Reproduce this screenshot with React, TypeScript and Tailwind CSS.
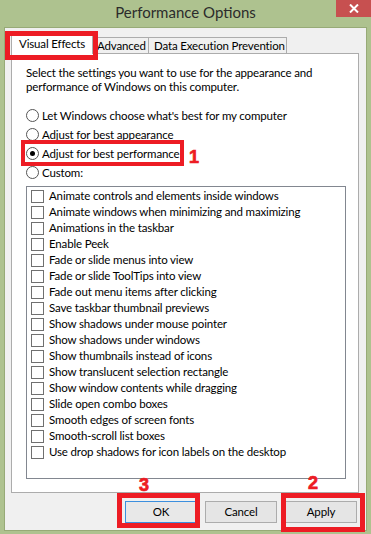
import { useState } from 'react';

const EFFECTS = [
  'Animate controls and elements inside windows',
  'Animate windows when minimizing and maximizing',
  'Animations in the taskbar',
  'Enable Peek',
  'Fade or slide menus into view',
  'Fade or slide ToolTips into view',
  'Fade out menu items after clicking',
  'Save taskbar thumbnail previews',
  'Show shadows under mouse pointer',
  'Show shadows under windows',
  'Show thumbnails instead of icons',
  'Show translucent selection rectangle',
  'Show window contents while dragging',
  'Slide open combo boxes',
  'Smooth edges of screen fonts',
  'Smooth-scroll list boxes',
  'Use drop shadows for icon labels on the desktop',
];

const MODES = [
  { id: 'auto', label: "Let Windows choose what's best for my computer" },
  { id: 'appearance', label: 'Adjust for best appearance' },
  { id: 'performance', label: 'Adjust for best performance' },
  { id: 'custom', label: 'Custom:' },
];

const TABS = ['Visual Effects', 'Advanced', 'Data Execution Prevention'];

// annotation digit drawn over the screenshot
function Marker({ n, className }: { n: string; className: string }) {
  return (
    <span
      className={`absolute font-bold text-[18px] leading-none tracking-normal text-[#ed1c24] [-webkit-text-stroke:0.7px_#ed1c24] ${className}`}
      style={{ fontFamily: '"Liberation Sans", Arial, sans-serif' }}
    >
      {n}
    </span>
  );
}

export default function App() {
  const [mode, setMode] = useState('performance');
  const [checked, setChecked] = useState<Record<number, boolean>>({});

  return (
    <div
      className="w-[371px] h-[534px] bg-[#aec28f] flex flex-col overflow-hidden text-black"
      style={{ fontFamily: 'Lato, "Noto Sans", sans-serif' }}
    >
      {/* title bar */}
      <div className="relative h-[27px] flex justify-center">
        <span className="pt-[2px] text-[15px] leading-[20px] text-[#2b2b2b]">Performance Options</span>
        <button className="absolute right-0 top-0 w-[35px] h-[17px] bg-[#c75050] flex items-center justify-center">
          <svg width="10" height="9" viewBox="0 0 10 9" stroke="white" strokeWidth="2">
            <path d="M1 0.5l8 8M9 0.5l-8 8" />
          </svg>
        </button>
      </div>

      {/* client area */}
      <div className="ml-[4px] w-[363px] h-[504px] border border-[#97aa77] bg-[#f0f0f0] flex flex-col text-[11.5px] tracking-[-0.15px]">
        <div className="h-[25px] pl-[6px] flex items-end whitespace-nowrap">
          {TABS.map((t, i) =>
            i === 0 ? (
              <div
                key={t}
                className="relative z-10 -mb-px w-[82px] h-[20px] pl-[7px] bg-white border border-b-0 border-[#acacac] leading-[18px]"
              >
                {t}
                <div className="absolute left-[-7px] top-[-4px] w-[93px] h-[29px] border-[5px] border-[#ed1c24]" />
              </div>
            ) : (
              <div
                key={t}
                className={`h-[16px] border border-b-0 border-[#acacac] bg-[#f0f0f0] leading-[15px] ${
                  i === 1 ? 'w-[56px] pl-[4px] border-l-0' : 'w-[139px] pl-[5px] -ml-px'
                }`}
              >
                {t}
              </div>
            ),
          )}
        </div>

        <div className="ml-[6px] w-[348px] h-[440px] border border-[#acacac] bg-white pl-[14px] pt-[12px]">
          <p className="leading-[14px]">
            Select the settings you want to use for the appearance and
            <br />
            performance of Windows on this computer.
          </p>

          <div className="mt-[12px] flex flex-col">
            {MODES.map((m) => (
              <label key={m.id} className="relative h-[19px] flex items-center gap-[3px]" onClick={() => setMode(m.id)}>
                <span className="w-[13px] h-[13px] rounded-full border border-[#555] bg-white flex items-center justify-center">
                  {mode === m.id && <span className="w-[5px] h-[5px] rounded-full bg-black" />}
                </span>
                <span className="leading-[19px]">{m.label}</span>
                {m.id === 'performance' && (
                  <>
                    <div className="absolute left-[-5px] top-[-4px] w-[163px] h-[26px] border-[4px] border-[#ed1c24]" />
                    <Marker n="1" className="left-[163px] top-[4px]" />
                  </>
                )}
              </label>
            ))}
          </div>

          <div className="mt-[4px] w-[320px] h-[293px] border border-[#828790] pt-[1px] pl-[4px]">
            {EFFECTS.map((e, i) => (
              <label
                key={e}
                className="h-[16px] flex items-center gap-[5px]"
                onClick={() => setChecked((c) => ({ ...c, [i]: !c[i] }))}
              >
                <span className="w-[13px] h-[13px] border border-[#707070] bg-white flex items-center justify-center">
                  {checked[i] && (
                    <svg width="9" height="9" viewBox="0 0 9 9" fill="none" stroke="black" strokeWidth="1.5">
                      <path d="M1 4.5l2.5 2.5 4.5-6" />
                    </svg>
                  )}
                </span>
                <span className="leading-[16px]">{e}</span>
              </label>
            ))}
          </div>
        </div>

        <div className="mt-[8px] pr-[9px] flex justify-end gap-[8px]">
          <button className="relative w-[72px] h-[22px] border border-[#3c8fde] bg-[#e8e8e8]">
            OK
            <div className="absolute left-[-9px] top-[-9px] w-[83px] h-[35px] border-[5px] border-[#ed1c24]" />
            <Marker n="3" className="left-[13px] top-[-26px]" />
          </button>
          <button className="w-[72px] h-[22px] border border-[#acacac] bg-[#e5e5e5]">Cancel</button>
          <button className="relative w-[72px] h-[22px] border border-[#acacac] bg-[#e5e5e5]">
            Apply
            <div className="absolute left-[-5px] top-[-9px] w-[84px] h-[39px] border-[5px] border-[#ed1c24]" />
            <Marker n="2" className="left-[22px] top-[-28px]" />
          </button>
        </div>
      </div>
    </div>
  );
}
